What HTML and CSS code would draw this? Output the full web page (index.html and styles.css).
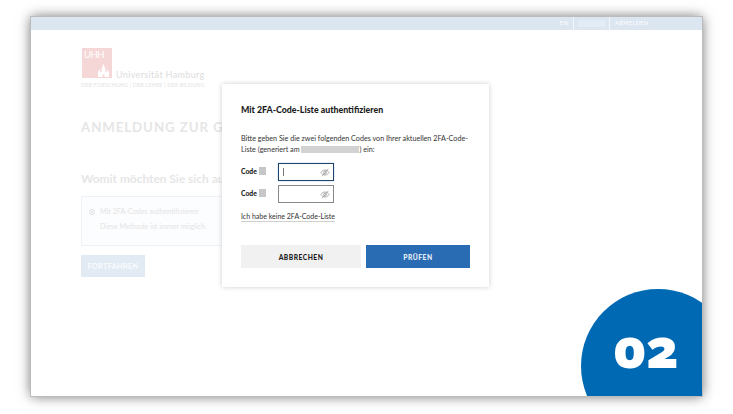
FILE: index.html
```html
<!DOCTYPE html>
<html lang="de">
<head>
  <meta charset="UTF-8" />
  <meta name="viewport" content="width=device-width, initial-scale=1.0" />
  <title>Mit 2FA-Code-Liste authentifizieren</title>
  <link rel="stylesheet" href="styles.css">
</head>
<body>
  <div class="window">
    <header class="topbar">
      <a href="#" class="lang">EN</a>
      <span class="user"><span class="user-mask"></span></span>
      <a href="#" class="logout">ABMELDEN</a>
    </header>
    <main class="page">
      <div class="logo">
        <div class="logo-top">
          <div class="logo-mark">
            <span class="logo-uhh">UHH</span>
            <svg class="logo-castle" viewBox="0 0 14 14" aria-hidden="true">
              <path d="M1 14V8h1V6h1v2h1V9h1V4h1V2l1-2 1 2v2h1v5h1V8h1V6h1v2h1v6H8v-3H6v3z" fill="#fff" />
            </svg>
          </div>
          <span class="logo-name">Universität Hamburg</span>
        </div>
        <div class="logo-tag">DER FORSCHUNG | DER LEHRE | DER BILDUNG</div>
      </div>
      <h1 class="headline">ANMELDUNG ZUR GRUPPENVERWALTUNG</h1>
      <h2 class="question">Womit möchten Sie sich authentifizieren?</h2>
      <div class="method">
        <div class="method-row">
          <span class="radio"></span>
          <span>Mit 2FA-Codes authentifizieren</span>
        </div>
        <p class="method-note">Diese Methode ist immer möglich.</p>
      </div>
      <button class="next" type="button">FORTFAHREN</button>
    </main>

    <section class="modal">
      <h3 class="modal-title">Mit 2FA-Code-Liste authentifizieren</h3>
      <p class="modal-text">Bitte geben Sie die zwei folgenden Codes von Ihrer aktuellen 2FA-Code-Liste (generiert am <span class="mask-date"></span>) ein:</p>
      <div class="code-row">
        <label class="code-label">Code <span class="mask-code"></span></label>
        <div class="code-input active">
          <span class="caret"></span>
          <svg class="eye" viewBox="0 0 12 10" aria-hidden="true">
            <path d="M1 5c1.5-2 3-3 5-3s3.500 1 5 3c-1.500 2-3 3-5 3S2.500 7 1 5z" />
            <circle cx="6" cy="5" r="1.700" />
            <path d="M2.500 9.500 10 .5" />
          </svg>
        </div>
      </div>
      <div class="code-row">
        <label class="code-label">Code <span class="mask-code"></span></label>
        <div class="code-input">
          <svg class="eye" viewBox="0 0 12 10" aria-hidden="true">
            <path d="M1 5c1.5-2 3-3 5-3s3.500 1 5 3c-1.500 2-3 3-5 3S2.500 7 1 5z" />
            <circle cx="6" cy="5" r="1.700" />
            <path d="M2.500 9.500 10 .5" />
          </svg>
        </div>
      </div>
      <a href="#" class="no-list">Ich habe keine 2FA-Code-Liste</a>
      <div class="modal-actions">
        <button class="btn btn-cancel" type="button">ABBRECHEN</button>
        <button class="btn btn-check" type="button">PRÜFEN</button>
      </div>
    </section>

    <div class="step">02</div>
  </div>
</body>
</html>
```

FILE: styles.css
```css
* {
  box-sizing: border-box;
}
html, body {
  height: 100%;
}
body {
  margin: 0;
  padding: 17px 31px 18px 31px;
  background: #fff;
  font-family: "Lato", sans-serif;
  overflow: hidden;
}
.window {
  position: relative;
  width: 671px;
  height: 379px;
  background: #fff;
  overflow: hidden;
  display: flex;
  flex-direction: column;
  outline: 1px solid #bcbcbc;
}
body::before {
  content: "";
  position: absolute;
  left: 31px;
  top: 17px;
  width: 671px;
  height: 379px;
  box-shadow: 0 0 12px rgba(0, 0, 0, 0.6);
}

/* top bar */
.topbar {
  height: 13px;
  flex: none;
  background: #dce6f1;
  display: flex;
  align-items: stretch;
  padding-left: 529px;
  font-size: 5.300px;
  letter-spacing: 0.6px;
  color: #fff;
}
.topbar a {
  color: #fff;
  text-decoration: none;
  line-height: 13px;
}
.lang {
  width: 13px;
}
.user {
  width: 37px;
  border-left: 1px solid #f2f6fa;
  border-right: 1px solid #f2f6fa;
  padding: 3px 4px;
}
.user-mask {
  display: block;
  height: 7px;
  background: #e3ebf4;
}
.logout {
  margin-left: 5px;
}

/* page behind the dialog */
.page {
  flex: 1;
  padding: 18px 0 0 50px;
  white-space: nowrap;
}
.logo-top {
  display: flex;
  align-items: flex-end;
  margin-left: 1px;
}
.logo-mark {
  position: relative;
  width: 30px;
  height: 30px;
  background: #f5d7d7;
}
.logo-uhh {
  position: absolute;
  left: 2px;
  top: 1px;
  font-size: 9.500px;
  line-height: 12px;
  letter-spacing: -0.5px;
  color: #fff;
}
.logo-castle {
  position: absolute;
  right: 2px;
  bottom: 1px;
  width: 13px;
  height: 13px;
}
.logo-name {
  margin: 0 0 -2px 4px;
  font-size: 9px;
  line-height: 10px;
  letter-spacing: 0.35px;
  color: #dcdcdc;
}
.logo-tag {
  margin-top: 4px;
  font-size: 5.300px;
  line-height: 6px;
  letter-spacing: 0.2px;
  color: #e2e2e2;
}
.headline {
  margin: 30px 0 0;
  font-size: 13.300px;
  line-height: 18px;
  font-weight: 700;
  letter-spacing: 0.9px;
  color: #e6e6e6;
}
.question {
  margin: 35px 0 0;
  font-size: 11.900px;
  line-height: 16px;
  font-weight: 700;
  color: #e6e6e6;
}
.method {
  margin-top: 9px;
  width: 200px;
  height: 50px;
  border: 1px solid #eef1f6;
  background: #fcfdfe;
  padding: 10px 0 0 7px;
  font-size: 7.150px;
  color: #e4e4e4;
}
.method-row {
  display: flex;
  align-items: center;
  gap: 5px;
  line-height: 10px;
}
.radio {
  width: 6px;
  height: 6px;
  border-radius: 50%;
  border: 1px solid #e4e4e4;
  background: #e4e4e4;
  box-shadow: inset 0 0 0 1px #fff;
}
.method-note {
  margin: 5px 0 0 11px;
  line-height: 10px;
}
.next {
  display: block;
  margin-top: 9px;
  width: 64px;
  height: 22px;
  border: none;
  background: #e2eaf4;
  color: #f8fafc;
  font-family: inherit;
  font-size: 7.300px;
  font-weight: 900;
  letter-spacing: 0.3px;
}

/* dialog */
.modal {
  position: absolute;
  left: 191px;
  top: 67px;
  width: 267px;
  height: 203px;
  background: #fff;
  box-shadow: 0 0 5px rgba(0, 0, 0, 0.2);
  padding: 19px 19px 0;
}
.modal-title {
  margin: 0;
  font-size: 8.800px;
  line-height: 13px;
  font-weight: 900;
  color: #1d1d1d;
}
.modal-text {
  margin: 18px 0 0;
  font-size: 7.200px;
  line-height: 10.500px;
  color: #333;
}
.mask-date {
  display: inline-block;
  width: 58px;
  height: 7px;
  vertical-align: -1px;
  background: #d2d2d2;
}
.code-row {
  display: flex;
  align-items: center;
  height: 18px;
  margin-top: 4px;
}
.modal-text + .code-row {
  margin-top: 8px;
}
.code-label {
  display: flex;
  align-items: center;
  gap: 2px;
  width: 37px;
  padding-bottom: 2px;
  font-size: 6.800px;
  font-weight: 900;
  color: #222;
}
.mask-code {
  width: 7px;
  height: 8px;
  background: #c6c6c6;
}
.code-input {
  position: relative;
  width: 56px;
  height: 18px;
  border: 1px solid #8a8a8a;
  background: #fff;
}
.code-input.active {
  border: 1.500px solid #21446f;
  box-shadow: 0 0 1px #6d9fd4;
}
.caret {
  position: absolute;
  left: 4px;
  top: 4px;
  width: 1px;
  height: 8px;
  background: #777;
}
.eye {
  position: absolute;
  right: 3px;
  top: 4px;
  width: 10px;
  height: 9px;
  fill: none;
  stroke: #8c8c8c;
  stroke-width: 0.8;
}
.no-list {
  display: inline-block;
  margin-top: 7px;
  font-size: 7px;
  line-height: 10px;
  color: #333;
  text-decoration: none;
  border-bottom: 1px solid #cfcfcf;
}
.modal-actions {
  display: flex;
  gap: 5px;
  margin-top: 23px;
}
.btn {
  height: 23px;
  border: none;
  font-family: inherit;
  font-size: 6.700px;
  font-weight: 900;
  letter-spacing: 0.5px;
}
.btn-cancel {
  width: 120px;
  background: #f1f1f1;
  color: #1c1c1c;
}
.btn-check {
  width: 104px;
  background: #2a6cb3;
  color: #e8f0f8;
}

/* step badge */
.step {
  position: absolute;
  left: 550px;
  top: 272px;
  width: 154px;
  height: 154px;
  border-radius: 50%;
  background: #0069b4;
  color: #fff;
  font-family: "Open Sans", sans-serif;
  font-feature-settings: "onum";
  font-size: 54px;
  font-weight: 800;
  line-height: 116px;
  text-align: center;
  padding-right: 24px;
}
```
